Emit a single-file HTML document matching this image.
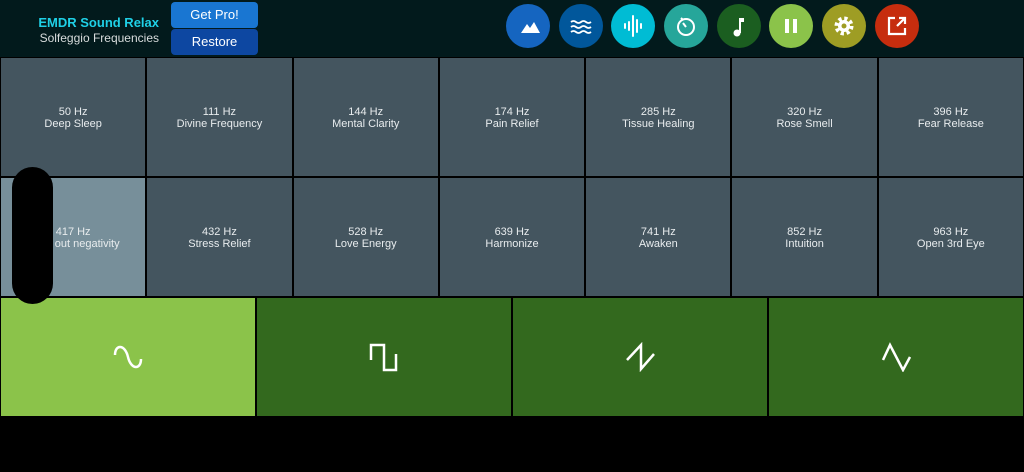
<!DOCTYPE html><html><head><style>
*{margin:0;padding:0;box-sizing:border-box}
body{width:1024px;height:472px;background:#000;font-family:"Liberation Sans",sans-serif;position:relative;overflow:hidden}
.hdr{position:absolute;left:0;top:0;width:1024px;height:57px;background:#021a1c}
.t1{position:absolute;right:865px;top:15px;color:#1fd0e6;font-weight:bold;font-size:13px;white-space:nowrap}
.t2{position:absolute;right:865px;top:31px;color:#d8dcdc;font-size:12px;white-space:nowrap}
.btn{position:absolute;left:171px;width:87px;height:26px;border-radius:4px;color:#fff;font-size:13px;text-align:center;line-height:26px}
.c{position:absolute;top:4px;width:44px;height:44px;border-radius:50%}
.c svg{position:absolute;left:0;top:0}
.grid{position:absolute;left:1px;top:58px;width:1022px;display:grid;grid-template-columns:repeat(7,1fr);gap:2px}
.cell{height:118px;background:#44555f;color:#e8ecee;font-size:11px;text-align:center;display:flex;flex-direction:column;justify-content:center;line-height:12px;padding-top:2px}
.sel{background:#778f9a}
.bot{position:absolute;left:1px;top:298px;width:1022px;display:grid;grid-template-columns:repeat(4,1fr);gap:2px}
.b{height:118px;background:#33691e;position:relative}
.b svg{position:absolute;left:50%;top:44px;margin-left:-15px}
.pill{position:absolute;left:12px;top:167px;width:41px;height:137px;border-radius:21px;background:#000}
</style></head><body>
<div class="hdr">
<div class="t1">EMDR Sound Relax</div>
<div class="t2">Solfeggio Frequencies</div>
<div class="btn" style="top:2px;background:#1976d2">Get Pro!</div>
<div class="btn" style="top:29px;background:#0d47a1">Restore</div>
<div class="c" style="left:506px;background:#1565c0"><svg width="44" height="44"><path d="M15 29l6-9 3 4 4-6 6 11z" fill="#fff"/></svg></div>
<div class="c" style="left:559px;background:#01579b"><svg width="44" height="44" fill="none" stroke="#fff" stroke-width="1.8"><path d="M12 18q2.5-2 5 0t5 0 5 0 5 0M12 23q2.5-2 5 0t5 0 5 0 5 0M12 28q2.5-2 5 0t5 0 5 0 5 0"/></svg></div>
<div class="c" style="left:611px;background:#00bcd4"><svg width="44" height="44" stroke="#fff" stroke-width="2" stroke-linecap="round"><path d="M14 20v4M18 18v8M22 12v20M26 16v12M30 20v4"/></svg></div>
<div class="c" style="left:664px;background:#26a69a"><svg width="44" height="44" fill="none" stroke="#fff" stroke-width="2"><circle cx="22" cy="23" r="8"/><path d="M22 23l-3-4M17 14l2 2"/></svg></div>
<div class="c" style="left:717px;background:#1b5e20"><svg width="44" height="44"><circle cx="20" cy="29" r="3.5" fill="#fff"/><path d="M22 29V14h5v4h-3v11" fill="#fff"/></svg></div>
<div class="c" style="left:769px;background:#8bc34a"><svg width="44" height="44" fill="#fff"><rect x="16" y="15" width="4" height="14"/><rect x="24" y="15" width="4" height="14"/></svg></div>
<div class="c" style="left:822px;background:#9e9d24"><svg width="44" height="44"><circle cx="22" cy="22" r="7" fill="none" stroke="#fff" stroke-width="5" stroke-dasharray="3 2.5"/><circle cx="22" cy="22" r="6" fill="#fff"/><circle cx="22" cy="22" r="2.5" fill="#9e9d24"/></svg></div>
<div class="c" style="left:875px;background:#c62d0e"><svg width="44" height="44" fill="none" stroke="#fff" stroke-width="2.2"><path d="M20 14h-6v16h16v-6M22 22l8-8M24 14h6v6"/></svg></div>
</div>
<div class="grid">
<div class="cell"><div>50 Hz</div><div>Deep Sleep</div></div>
<div class="cell"><div>111 Hz</div><div>Divine Frequency</div></div>
<div class="cell"><div>144 Hz</div><div>Mental Clarity</div></div>
<div class="cell"><div>174 Hz</div><div>Pain Relief</div></div>
<div class="cell"><div>285 Hz</div><div>Tissue Healing</div></div>
<div class="cell"><div>320 Hz</div><div>Rose Smell</div></div>
<div class="cell"><div>396 Hz</div><div>Fear Release</div></div>
<div class="cell sel"><div>417 Hz</div><div>Wipe out negativity</div></div>
<div class="cell"><div>432 Hz</div><div>Stress Relief</div></div>
<div class="cell"><div>528 Hz</div><div>Love Energy</div></div>
<div class="cell"><div>639 Hz</div><div>Harmonize</div></div>
<div class="cell"><div>741 Hz</div><div>Awaken</div></div>
<div class="cell"><div>852 Hz</div><div>Intuition</div></div>
<div class="cell"><div>963 Hz</div><div>Open 3rd Eye</div></div>
</div>
<div class="bot">
<div class="b" style="background:#8bc34a"><svg width="30" height="30" fill="none" stroke="#fff" stroke-width="2.5"><path d="M2 13C2 2 12 2 15 15S28 28 28 17"/></svg></div>
<div class="b"><svg width="30" height="30" fill="none" stroke="#fff" stroke-width="2.5"><path d="M2 18V3h13v25h12V12"/></svg></div>
<div class="b"><svg width="30" height="30" fill="none" stroke="#fff" stroke-width="2.5"><path d="M2 18L16 3v24L29 12"/></svg></div>
<div class="b"><svg width="30" height="30" fill="none" stroke="#fff" stroke-width="2.5"><path d="M2 18L9 3l13 25 7-13"/></svg></div>
</div>
<div class="pill"></div>
</body></html>
